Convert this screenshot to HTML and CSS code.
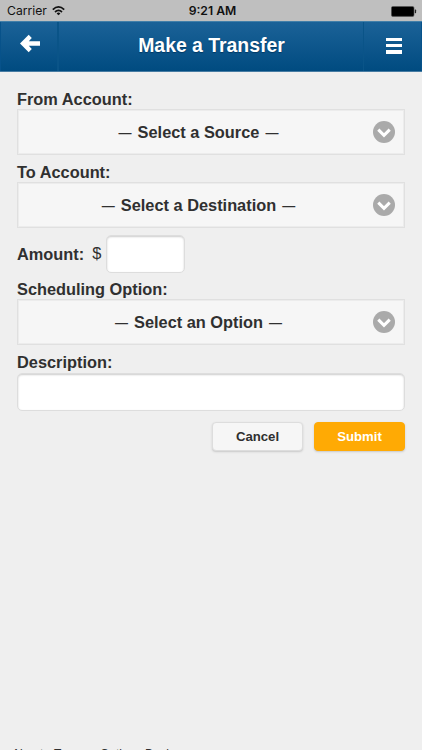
FILE: index.html
```html
<!DOCTYPE html>
<html lang="en">
<head>
<meta charset="utf-8">
<title>Make a Transfer</title>
<link rel="stylesheet" href="styles.css">
</head>
<body>
<div class="screen">
  <div class="status">
    <div class="carrier"><span>Carrier</span>
      <svg width="13" height="10" viewBox="0 0 13 10" fill="none" stroke="#111" stroke-width="1.7"><path d="M.8 3.6Q6.5-1.8 12.2 3.6M3 6Q6.5 2.8 10 6"/><path d="M4.6 7.4Q6.5 5.8 8.4 7.4L6.5 9.3Z" fill="#111" stroke="none"/></svg>
    </div>
    <div class="time">9:21 AM</div>
    <div class="power"><svg width="26" height="11" viewBox="0 0 26 11"><rect x=".4" y=".4" width="22.6" height="10" rx="1.5" fill="#000" stroke="#555" stroke-width=".6"/><path d="M23.8 3.5h.6q.7 0 .7.7v2.3q0 .7-.7.7h-.6z" fill="#222"/></svg></div>
  </div>
  <header class="bar">
    <a class="back"><svg width="20" height="19" viewBox="0 0 20 19"><path d="M0 9.5 8.7.8 11.8 3.9 8.8 7.2H20v4.6H8.8l3 3.3-3.1 3.1z" fill="#fff"/></svg></a>
    <h1>Make a Transfer</h1>
    <a class="menu"><i></i><i></i><i></i></a>
  </header>
  <main class="form">
    <label>From Account:</label>
    <div class="select"><span><b>—</b> Select a Source <b>—</b></span><svg class="chevron" viewBox="0 0 22 22"><circle cx="11" cy="11" r="11" fill="#aaa"/><path d="M5.3 8.7 11 14.3l5.7-5.6" fill="none" stroke="#fff" stroke-width="3.1"/></svg></div>
    <label>To Account:</label>
    <div class="select"><span><b>—</b> Select a Destination <b>—</b></span><svg class="chevron" viewBox="0 0 22 22"><circle cx="11" cy="11" r="11" fill="#aaa"/><path d="M5.3 8.7 11 14.3l5.7-5.6" fill="none" stroke="#fff" stroke-width="3.1"/></svg></div>
    <div class="amount"><label>Amount:</label><span class="currency">$</span><input type="text" class="field short"></div>
    <label>Scheduling Option:</label>
    <div class="select"><span><b>—</b> Select an Option <b>—</b></span><svg class="chevron" viewBox="0 0 22 22"><circle cx="11" cy="11" r="11" fill="#aaa"/><path d="M5.3 8.7 11 14.3l5.7-5.6" fill="none" stroke="#fff" stroke-width="3.1"/></svg></div>
    <label>Description:</label>
    <input type="text" class="field">
    <div class="actions"><button>Cancel</button><button class="submit">Submit</button></div>
  </main>
  <footer><span>About</span><span>Terms</span><span>Options</span><span>Bank</span></footer>
</div>
</body>
</html>
```
FILE: styles.css
```css
* { box-sizing: border-box; }
body { margin: 0; background: #efefef; color: #303030; font-family: "Liberation Sans", Arial, sans-serif; }
.screen { height: 750px; overflow: hidden; display: flex; flex-direction: column; }
.status { height: 21px; flex: none; background: #bfbfbf; display: grid; grid-template-columns: 1fr auto 1fr; padding: 0 5px 0 7px; font: 12.2px/22px Inter, sans-serif; color: #111; }
.carrier { display: flex; align-items: center; gap: 5px; }
.time { font-weight: 600; padding-left: 1px; }
.power { display: flex; align-items: center; justify-content: flex-end; }
.bar { height: 51px; flex: none; display: grid; grid-template-columns: 59px 1fr 59px; background: linear-gradient(#1b6298, #004b80); border-top: 1px solid #427fa9; border-bottom: 1px solid #477ca3; color: #fff; }
.back { display: flex; justify-content: center; padding: 12px 0 0 2px; border-left: 1px solid #07528a; border-right: 2px solid #0a5488; }
h1 { margin: 0; text-align: center; font-size: 19.4px; line-height: 46px; padding-left: 1px; text-shadow: 0 1px 1px #003965; }
.menu { display: flex; flex-direction: column; align-items: center; gap: 3px; padding: 15.5px 0 0 2px; border-left: 1px solid #0a5488; border-right: 1px solid #07528a; }
.menu i { width: 16px; height: 3.4px; background: #fff; }
.form { padding: 17px 17px 0; font-size: 16.35px; }
label { display: block; height: 20px; line-height: 20px; font-weight: bold; }
.select { height: 46px; margin-bottom: 7px; border: 1px solid #e0e0e0; box-shadow: inset 0 0 0 1px #ececec; background: #f6f6f6; display: grid; grid-template-columns: 1fr 22px; align-items: center; padding: 0 9px 0 8px; font-weight: bold; }
.select span { text-align: center; white-space: nowrap; padding-right: 2px; }
.select b { font-size: 13px; margin: 0 1.5px 0 0; vertical-align: 1px; line-height: 1; }
.select b:last-child { margin: 0 0 0 1.5px; }
.chevron { width: 22px; height: 22px; }
.amount { height: 44px; display: flex; align-items: center; padding-bottom: 7px; }
.currency { margin: 0 5px 0 8px; }
.field { display: block; width: 100%; height: 38px; border: 1px solid #ddd; border-radius: 5px; background: #fff; box-shadow: inset 0 1px 2px #ccc; }
.short { width: 79px; }
.form > .field { margin-top: 1px; }
.actions { display: flex; justify-content: flex-end; gap: 11px; padding-top: 11px; }
button { width: 91px; height: 29px; padding: 0; border: 1px solid #ddd; border-radius: 4px; background: #f6f6f6; box-shadow: 0 1px 2px #c8c8c8; color: #303030; font: bold 13.2px "Liberation Sans", Arial, sans-serif; }
.submit { border-color: #ffaa04; background: #ffaa04; color: #fff; }
footer { margin: auto 0 -11px 12px; display: grid; grid-template-columns: 42px 46px 45px auto; font-size: 12px; line-height: 13px; }
```
